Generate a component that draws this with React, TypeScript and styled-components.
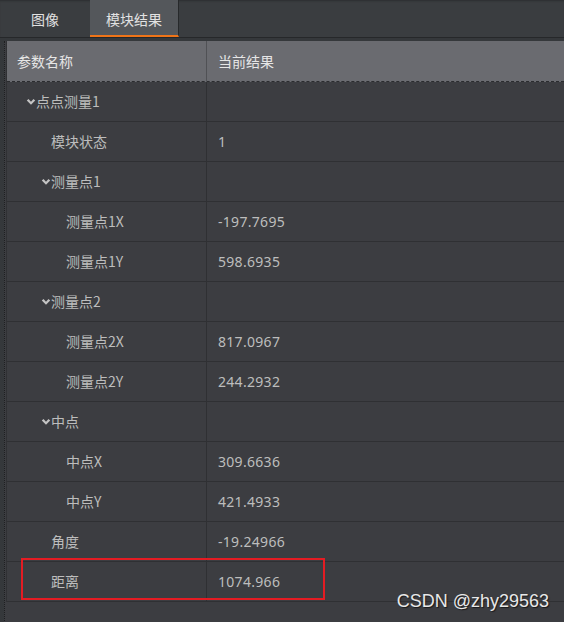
import React from "react";
import styled, { createGlobalStyle } from "styled-components";

const GlobalStyle = createGlobalStyle`
  html, body {
    margin: 0;
    padding: 0;
    background: #3c3d41;
  }
  body {
    font-family: "Noto Sans", "Noto Sans CJK SC", sans-serif;
    font-size: 14px;
    color: #bdbdbd;
  }
`;

const Page = styled.div`
  position: relative;
  width: 564px;
  height: 622px;
  overflow: hidden;
  background: #3c3d41;
`;

const TabBar = styled.div`
  display: flex;
  height: 37px;
  background: #3a3d40;
  border-bottom: 1px solid #26282a;
  box-shadow: inset 0 2px 2px -1px #2c2e30;
`;

const Tab = styled.div<{ $active?: boolean }>`
  width: ${(p) => (p.$active ? "89px" : "90px")};
  display: flex;
  align-items: center;
  justify-content: center;
  color: #e2e2e2;
  font-family: "Noto Sans CJK SC", sans-serif;
  font-size: 14px;
  box-sizing: border-box;
  background: ${(p) => (p.$active ? "#54575b" : "transparent")};
  border-bottom: ${(p) => (p.$active ? "2px solid #f07418" : "none")};
  border-right: ${(p) => (p.$active ? "1px solid #27292b" : "none")};
  padding-top: ${(p) => (p.$active ? "2px" : "0")};
`;

const Body = styled.div`
  padding-top: 3px;
  background: #35383b;
  height: 100%;
`;

const Frame = styled.div`
  margin-left: 4px;
  border-left: 1px dotted #1e1f21;
  padding-left: 1px;
  background: #3c3d41;
  height: 100%;
`;

const Table = styled.div`
  position: relative;
  border-left: 1px solid #303134;
`;

const HeaderRow = styled.div`
  display: grid;
  grid-template-columns: 200px 1fr;
  height: 40px;
  background: #6a6b70;
  border-bottom: 1px dashed #2a2b2e;
  color: #e6e6e6;
  font-family: "Noto Sans CJK SC", sans-serif;
`;

const HeaderCell = styled.div<{ $first?: boolean }>`
  display: flex;
  align-items: center;
  padding-left: ${(p) => (p.$first ? "10px" : "11px")};
  border-right: ${(p) => (p.$first ? "1px solid #505155" : "none")};
`;

const Row = styled.div`
  position: relative;
  display: grid;
  grid-template-columns: 200px 1fr;
  height: 39px;
  border-bottom: 1px solid #2f3033;
`;

const NameCell = styled.div<{ $level: number }>`
  display: flex;
  align-items: center;
  padding-left: ${(p) => 29 + p.$level * 15}px;
  padding-bottom: 2px;
  border-right: 1px solid #2f3033;
  font-family: "Noto Sans CJK SC", sans-serif;
`;

const ValueCell = styled.div`
  display: flex;
  align-items: center;
  padding-left: 11px;
  padding-bottom: 1px;
  letter-spacing: 0.3px;
  font-family: "Noto Sans", "Noto Sans CJK SC", sans-serif;
`;

const Chevron = styled.svg`
  width: 10px;
  height: 8px;
  margin-left: -10px;
  margin-top: 3px;
`;

const Highlight = styled.div`
  position: absolute;
  left: 14px;
  top: -4px;
  width: 304px;
  height: 42px;
  border: 2px solid #e41c23;
  box-sizing: border-box;
  pointer-events: none;
`;

const Watermark = styled.div`
  position: absolute;
  right: 15px;
  bottom: 10px;
  font-family: "Liberation Sans", Arial, sans-serif;
  font-size: 18px;
  color: #e8e8e8;
  text-shadow: 1px 1px 1px rgba(0, 0, 0, 0.6);
`;

type Item = {
  name: string;
  value?: string;
  level: number;
  group?: boolean;
  mark?: boolean;
};

const items: Item[] = [
  { name: "点点测量1", level: 0, group: true },
  { name: "模块状态", value: "1", level: 1 },
  { name: "测量点1", level: 1, group: true },
  { name: "测量点1X", value: "-197.7695", level: 2 },
  { name: "测量点1Y", value: "598.6935", level: 2 },
  { name: "测量点2", level: 1, group: true },
  { name: "测量点2X", value: "817.0967", level: 2 },
  { name: "测量点2Y", value: "244.2932", level: 2 },
  { name: "中点", level: 1, group: true },
  { name: "中点X", value: "309.6636", level: 2 },
  { name: "中点Y", value: "421.4933", level: 2 },
  { name: "角度", value: "-19.24966", level: 1 },
  { name: "距离", value: "1074.966", level: 1, mark: true },
];

const Arrow = () => (
  <Chevron viewBox="0 0 10 8">
    <path d="M0.8 2.4 L2.5 1 L5 3.7 L7.5 1 L9.2 2.4 L5 6.8 Z" fill="#c4c4c4" />
  </Chevron>
);

export default function App() {
  return (
    <Page>
      <GlobalStyle />
      <TabBar>
        <Tab>图像</Tab>
        <Tab $active>模块结果</Tab>
      </TabBar>
      <Body>
        <Frame>
          <Table>
            <HeaderRow>
              <HeaderCell $first>参数名称</HeaderCell>
              <HeaderCell>当前结果</HeaderCell>
            </HeaderRow>
            {items.map((it) => (
              <Row key={it.name}>
                <NameCell $level={it.level}>
                  {it.group && <Arrow />}
                  {it.name}
                </NameCell>
                <ValueCell>{it.value}</ValueCell>
                {it.mark && <Highlight />}
              </Row>
            ))}
          </Table>
        </Frame>
      </Body>
      <Watermark>CSDN @zhy29563</Watermark>
    </Page>
  );
}
